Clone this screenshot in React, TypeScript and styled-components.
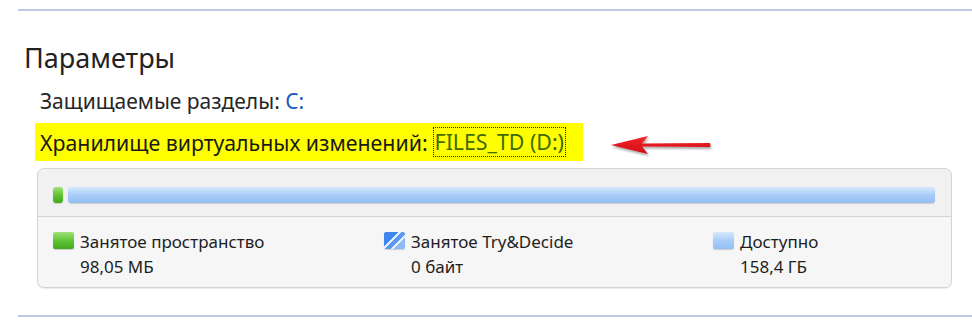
import React from 'react'
import styled, { createGlobalStyle } from 'styled-components'

const GlobalStyle = createGlobalStyle`
  body {
    margin: 0;
    background: #ffffff;
    font-family: "Noto Sans", "Open Sans", sans-serif;
    color: #1a1a1a;
  }
`

const Page = styled.div`
  width: 972px;
  height: 329px;
  padding-top: 9px;
  box-sizing: border-box;
  overflow: hidden;
`

const Rule = styled.div`
  height: 2px;
  margin-left: 18px;
  background: #b9c9e4;
`

const Section = styled.section`
  padding: 30px 0 27px 24px;
`

const Title = styled.h2`
  margin: 0;
  font-size: 27px;
  font-weight: 400;
  line-height: 34px;
  color: #222;
`

const InfoRow = styled.div`
  margin: 12px 0 0 16px;
  font-size: 21px;
  line-height: 28px;
  color: #262626;
`

const DriveLink = styled.span`
  color: #1c5bbf;
`

const MarkedRow = styled.div`
  display: flex;
  align-items: center;
  margin-top: 8px;
  margin-left: 11px;
`

const Highlight = styled.div`
  display: flex;
  align-items: center;
  gap: 5px;
  height: 38px;
  padding: 0 17px 0 5px;
  background: #ffff00;
  font-size: 21.3px;
  color: #1a1a1a;
`

const FocusTarget = styled.span`
  padding: 0 1px;
  border: 1px dotted #222;
  color: #3d6b00;
  line-height: 28px;
`

const Arrow = styled.svg`
  margin-left: 26px;
  margin-top: 8px;
`

const Panel = styled.div`
  margin: 7px 20px 0 13px;
  border: 1px solid #d4d4d4;
  border-radius: 7px;
  background: #f1f1f1;
  box-shadow: 0 1px 1px rgba(0, 0, 0, 0.08);
  overflow: hidden;
`

const BarArea = styled.div`
  display: flex;
  gap: 5px;
  height: 48px;
  box-sizing: border-box;
  padding: 18px 16px 0 15px;
  border-bottom: 1px solid #d2d2d2;
`

const Segment = styled.div<{ $kind: 'used' | 'free' }>`
  height: 16px;
  border-radius: 3px;
  background: ${({ $kind }) => $kind === 'used'
    ? 'linear-gradient(#9fe27a, #5cc232 55%, #44a81e)'
    : 'linear-gradient(#d6e8fd, #a9cdf8 50%, #93bdf3)'};
  box-shadow: 0 1px 1px rgba(0, 0, 0, 0.15);
`

const Legend = styled.div`
  display: grid;
  grid-template-columns: 331px 329px 1fr;
  padding: 12px 0 8px 15px;
  background: #f6f6f6;
`

const LegendItem = styled.div`
  display: flex;
  gap: 6px;
`

const Swatch = styled.div<{ $kind: 'used' | 'try' | 'free' }>`
  width: 21px;
  height: 17px;
  margin-top: 3px;
  border-radius: 2px;
  box-shadow: 0 1px 1px rgba(0, 0, 0, 0.18);
  background: ${({ $kind }) => {
    if ($kind === 'used') return 'linear-gradient(#9fe27a, #5cc232 55%, #44a81e)'
    if ($kind === 'try') return 'linear-gradient(135deg, #3f86ee 0 38%, #e6f0fd 38% 46%, #5b98f0 46% 62%, #e6f0fd 62% 70%, #8fbaf5 70%)'
    return 'linear-gradient(#d6e8fd, #a9cdf8 50%, #93bdf3)'
  }};
`

const LegendText = styled.div`
  font-size: 17px;
  line-height: 25px;
  color: #1e1e1e;
`

const legend = [
  { kind: 'used' as const, label: 'Занятое пространство', value: '98,05 МБ' },
  { kind: 'try' as const, label: 'Занятое Try&Decide', value: '0 байт' },
  { kind: 'free' as const, label: 'Доступно', value: '158,4 ГБ' },
]

export default function App () {
  return (
    <Page>
      <GlobalStyle />
      <Rule />
      <Section>
        <Title>Параметры</Title>
        <InfoRow>
          Защищаемые разделы: <DriveLink>C:</DriveLink>
        </InfoRow>
        <MarkedRow>
          <Highlight>
            Хранилище виртуальных изменений:
            <FocusTarget>FILES_TD (D:)</FocusTarget>
          </Highlight>
          <Arrow width="106" height="26" viewBox="0 0 106 26">
            <defs>
              <filter id="sh" x="-10%" y="-50%" width="125%" height="220%">
                <feDropShadow dx="1" dy="2" stdDeviation="1.3" floodColor="#000" floodOpacity="0.35" />
              </filter>
              <linearGradient id="red" x1="0" y1="0" x2="0" y2="1">
                <stop offset="0" stopColor="#f2262b" />
                <stop offset="1" stopColor="#d10d14" />
              </linearGradient>
            </defs>
            <g filter="url(#sh)">
              <path d="M2 12 L39 3 L33 10.5 L101 10 Q102 12 101 14 L33 13.5 L39 21 Z" fill="url(#red)" />
            </g>
          </Arrow>
        </MarkedRow>
        <Panel>
          <BarArea>
            <Segment $kind="used" style={{ width: 10 }} />
            <Segment $kind="free" style={{ flex: 1 }} />
          </BarArea>
          <Legend>
            {legend.map((item) => (
              <LegendItem key={item.label}>
                <Swatch $kind={item.kind} />
                <LegendText>
                  {item.label}
                  <br />
                  {item.value}
                </LegendText>
              </LegendItem>
            ))}
          </Legend>
        </Panel>
      </Section>
      <Rule />
    </Page>
  )
}
